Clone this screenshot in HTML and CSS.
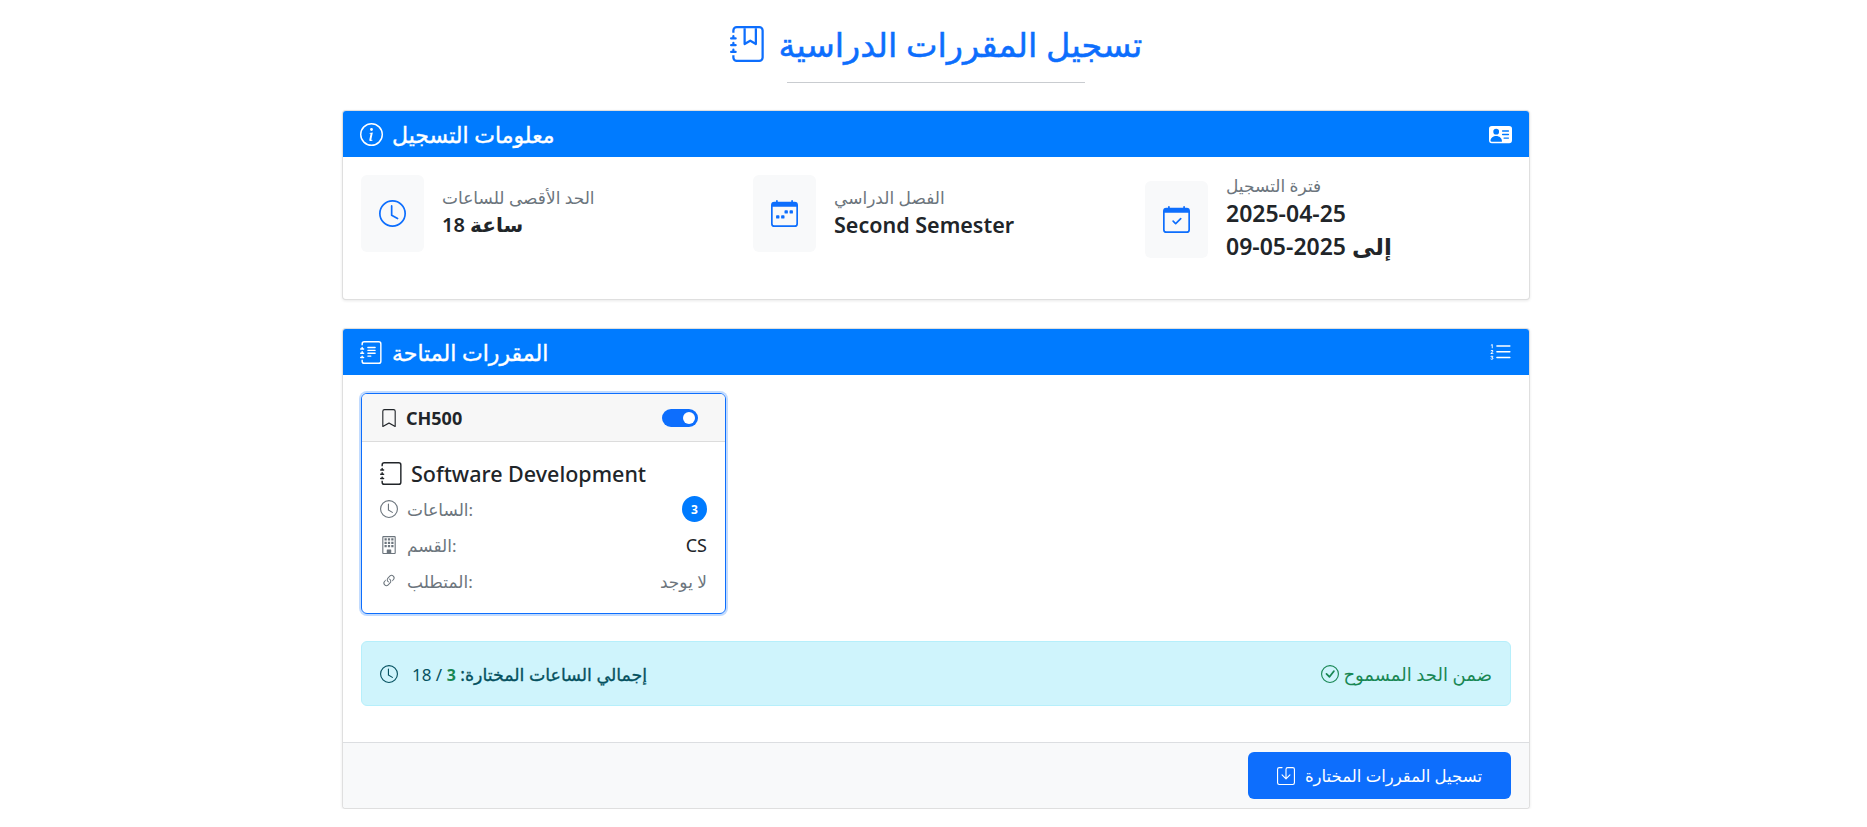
FILE: index.html
```html
<!DOCTYPE html>
<html lang="ar">
<head>
    <meta charset="UTF-8">
    <meta name="viewport" content="width=device-width, initial-scale=1.0">
    <title>تسجيل المقررات الدراسية</title>
    <link rel="stylesheet" href="styles.css">
</head>
<body>

<svg class="sprite" xmlns="http://www.w3.org/2000/svg">
    <symbol id="i-journal-bookmark" viewBox="0 0 16 16">
        <path fill-rule="evenodd" d="M6 8V1h1v6.117L8.743 6.07a.5.5 0 0 1 .514 0L11 7.117V1h1v7a.5.5 0 0 1-.757.429L9 7.083 6.757 8.43A.5.5 0 0 1 6 8z"/>
        <path d="M3 0h10a2 2 0 0 1 2 2v12a2 2 0 0 1-2 2H3a2 2 0 0 1-2-2v-1h1v1a1 1 0 0 0 1 1h10a1 1 0 0 0 1-1V2a1 1 0 0 0-1-1H3a1 1 0 0 0-1 1v1H1V2a2 2 0 0 1 2-2z"/>
        <path d="M1 5v-.5a.5.5 0 0 1 1 0V5h.5a.5.5 0 0 1 0 1h-2a.5.5 0 0 1 0-1H1zm0 3v-.5a.5.5 0 0 1 1 0V8h.5a.5.5 0 0 1 0 1h-2a.5.5 0 0 1 0-1H1zm0 3v-.5a.5.5 0 0 1 1 0v.5h.5a.5.5 0 0 1 0 1h-2a.5.5 0 0 1 0-1H1z"/>
    </symbol>
    <symbol id="i-journal" viewBox="0 0 16 16">
        <path d="M3 0h10a2 2 0 0 1 2 2v12a2 2 0 0 1-2 2H3a2 2 0 0 1-2-2v-1h1v1a1 1 0 0 0 1 1h10a1 1 0 0 0 1-1V2a1 1 0 0 0-1-1H3a1 1 0 0 0-1 1v1H1V2a2 2 0 0 1 2-2z"/>
        <path d="M1 5v-.5a.5.5 0 0 1 1 0V5h.5a.5.5 0 0 1 0 1h-2a.5.5 0 0 1 0-1H1zm0 3v-.5a.5.5 0 0 1 1 0V8h.5a.5.5 0 0 1 0 1h-2a.5.5 0 0 1 0-1H1zm0 3v-.5a.5.5 0 0 1 1 0v.5h.5a.5.5 0 0 1 0 1h-2a.5.5 0 0 1 0-1H1z"/>
    </symbol>
    <symbol id="i-journal-text" viewBox="0 0 16 16">
        <path d="M5 10.5a.5.5 0 0 1 .5-.5h2a.5.5 0 0 1 0 1h-2a.5.5 0 0 1-.5-.5zm0-2a.5.5 0 0 1 .5-.5h5a.5.5 0 0 1 0 1h-5a.5.5 0 0 1-.5-.5zm0-2a.5.5 0 0 1 .5-.5h5a.5.5 0 0 1 0 1h-5a.5.5 0 0 1-.5-.5zm0-2a.5.5 0 0 1 .5-.5h5a.5.5 0 0 1 0 1h-5a.5.5 0 0 1-.5-.5z"/>
        <path d="M3 0h10a2 2 0 0 1 2 2v12a2 2 0 0 1-2 2H3a2 2 0 0 1-2-2v-1h1v1a1 1 0 0 0 1 1h10a1 1 0 0 0 1-1V2a1 1 0 0 0-1-1H3a1 1 0 0 0-1 1v1H1V2a2 2 0 0 1 2-2z"/>
        <path d="M1 5v-.5a.5.5 0 0 1 1 0V5h.5a.5.5 0 0 1 0 1h-2a.5.5 0 0 1 0-1H1zm0 3v-.5a.5.5 0 0 1 1 0V8h.5a.5.5 0 0 1 0 1h-2a.5.5 0 0 1 0-1H1zm0 3v-.5a.5.5 0 0 1 1 0v.5h.5a.5.5 0 0 1 0 1h-2a.5.5 0 0 1 0-1H1z"/>
    </symbol>
    <symbol id="i-info" viewBox="0 0 16 16">
        <path d="M8 15A7 7 0 1 1 8 1a7 7 0 0 1 0 14zm0 1A8 8 0 1 0 8 0a8 8 0 0 0 0 16z"/>
        <path d="m8.93 6.588-2.29.287-.082.38.45.083c.294.07.352.176.288.469l-.738 3.468c-.194.897.105 1.319.808 1.319.545 0 1.178-.252 1.465-.598l.088-.416c-.2.176-.492.246-.686.246-.275 0-.375-.193-.304-.533L8.93 6.588zM9 4.5a1 1 0 1 1-2 0 1 1 0 0 1 2 0z"/>
    </symbol>
    <symbol id="i-vcard" viewBox="0 0 16 16">
        <path d="M0 4a2 2 0 0 1 2-2h12a2 2 0 0 1 2 2v8a2 2 0 0 1-2 2H2a2 2 0 0 1-2-2V4Zm9 1.5a.5.5 0 0 0 .5.5h4a.5.5 0 0 0 0-1h-4a.5.5 0 0 0-.5.5ZM9 8a.5.5 0 0 0 .5.5h4a.5.5 0 0 0 0-1h-4A.5.5 0 0 0 9 8Zm1 2.5a.5.5 0 0 0 .5.5h3a.5.5 0 0 0 0-1h-3a.5.5 0 0 0-.5.5Zm-1 2C9 10.567 7.21 9 5 9c-2.086 0-3.8 1.398-3.984 3.181A1 1 0 0 0 2 13h6.96c.026-.163.04-.33.04-.5ZM7 6a2 2 0 1 0-4 0 2 2 0 0 0 4 0Z"/>
    </symbol>
    <symbol id="i-list-ol" viewBox="0 0 16 16">
        <path fill-rule="evenodd" d="M5 11.5a.5.5 0 0 1 .5-.5h9a.5.5 0 0 1 0 1h-9a.5.5 0 0 1-.5-.5zm0-4a.5.5 0 0 1 .5-.5h9a.5.5 0 0 1 0 1h-9a.5.5 0 0 1-.5-.5zm0-4a.5.5 0 0 1 .5-.5h9a.5.5 0 0 1 0 1h-9a.5.5 0 0 1-.5-.5z"/>
        <path d="M1.713 11.865v-.474H2c.217 0 .363-.137.363-.317 0-.185-.158-.31-.361-.31-.223 0-.367.152-.373.31h-.59c.016-.467.373-.787.986-.787.588-.002.954.291.957.703a.595.595 0 0 1-.492.594v.033a.615.615 0 0 1 .569.631c.003.533-.502.8-1.051.8-.656 0-1-.37-1.008-.794h.582c.008.178.186.306.422.309.254 0 .424-.145.422-.35-.002-.195-.155-.348-.414-.348h-.3zm-.004-4.699h-.604v-.035c0-.408.295-.844.958-.844.583 0 .96.326.96.756 0 .389-.257.617-.476.848l-.537.572v.03h1.054V9H1.143v-.395l.957-.99c.138-.142.293-.304.293-.508 0-.18-.147-.32-.342-.32a.33.33 0 0 0-.342.338v.041zM2.564 5h-.635V2.924h-.031l-.598.42v-.567l.629-.443h.635V5z"/>
    </symbol>
    <symbol id="i-clock" viewBox="0 0 16 16">
        <path d="M8 3.5a.5.5 0 0 0-1 0V9a.5.5 0 0 0 .252.434l3.5 2a.5.5 0 0 0 .496-.868L8 8.71V3.5z"/>
        <path d="M8 16A8 8 0 1 0 8 0a8 8 0 0 0 0 16zm7-8A7 7 0 1 1 1 8a7 7 0 0 1 14 0z"/>
    </symbol>
    <symbol id="i-calendar-week" viewBox="0 0 16 16">
        <path d="M11 6.5a.5.5 0 0 1 .5-.5h1a.5.5 0 0 1 .5.5v1a.5.5 0 0 1-.5.5h-1a.5.5 0 0 1-.5-.5v-1zm-3 0a.5.5 0 0 1 .5-.5h1a.5.5 0 0 1 .5.5v1a.5.5 0 0 1-.5.5h-1a.5.5 0 0 1-.5-.5v-1zm-5 3a.5.5 0 0 1 .5-.5h1a.5.5 0 0 1 .5.5v1a.5.5 0 0 1-.5.5h-1a.5.5 0 0 1-.5-.5v-1zm3 0a.5.5 0 0 1 .5-.5h1a.5.5 0 0 1 .5.5v1a.5.5 0 0 1-.5.5h-1a.5.5 0 0 1-.5-.5v-1z"/>
        <path d="M3.5 0a.5.5 0 0 1 .5.5V1h8V.5a.5.5 0 0 1 1 0V1h1a2 2 0 0 1 2 2v11a2 2 0 0 1-2 2H2a2 2 0 0 1-2-2V3a2 2 0 0 1 2-2h1V.5a.5.5 0 0 1 .5-.5zM1 4v10a1 1 0 0 0 1 1h12a1 1 0 0 0 1-1V4H1z"/>
    </symbol>
    <symbol id="i-calendar-check" viewBox="0 0 16 16">
        <path d="M10.854 7.146a.5.5 0 0 1 0 .708l-3 3a.5.5 0 0 1-.708 0l-1.5-1.5a.5.5 0 1 1 .708-.708L7.5 9.793l2.646-2.647a.5.5 0 0 1 .708 0z"/>
        <path d="M3.5 0a.5.5 0 0 1 .5.5V1h8V.5a.5.5 0 0 1 1 0V1h1a2 2 0 0 1 2 2v11a2 2 0 0 1-2 2H2a2 2 0 0 1-2-2V3a2 2 0 0 1 2-2h1V.5a.5.5 0 0 1 .5-.5zM1 4v10a1 1 0 0 0 1 1h12a1 1 0 0 0 1-1V4H1z"/>
    </symbol>
    <symbol id="i-bookmark" viewBox="0 0 16 16">
        <path d="M2 2a2 2 0 0 1 2-2h8a2 2 0 0 1 2 2v13.5a.5.5 0 0 1-.777.416L8 13.101l-5.223 2.815A.5.5 0 0 1 2 15.5V2zm2-1a1 1 0 0 0-1 1v12.566l4.723-2.482a.5.5 0 0 1 .554 0L13 14.566V2a1 1 0 0 0-1-1H4z"/>
    </symbol>
    <symbol id="i-building" viewBox="0 0 16 16">
        <path d="M2 1a1 1 0 0 1 1-1h10a1 1 0 0 1 1 1v14a1 1 0 0 1-1 1H3a1 1 0 0 1-1-1V1Zm11 0H3v14h3v-2.5a.5.5 0 0 1 .5-.5h3a.5.5 0 0 1 .5.5V15h3V1Z"/>
        <path d="M4 2h2v2H4zM7 2h2v2H7zM10 2h2v2h-2zM4 5h2v2H4zM7 5h2v2H7zM10 5h2v2h-2zM4 8h2v2H4zM7 8h2v2H7zM10 8h2v2h-2z"/>
    </symbol>
    <symbol id="i-link" viewBox="0 0 16 16">
        <path d="M4.715 6.542 3.343 7.914a3 3 0 1 0 4.243 4.243l1.828-1.829A3 3 0 0 0 8.586 5.5L8 6.086a1.002 1.002 0 0 0-.154.199 2 2 0 0 1 .861 3.337L6.88 11.45a2 2 0 1 1-2.83-2.83l.793-.792a4.018 4.018 0 0 1-.128-1.287z"/>
        <path d="M6.586 4.672A3 3 0 0 0 7.414 9.5l.775-.776a2 2 0 0 1-.896-3.346L9.12 3.55a2 2 0 1 1 2.83 2.83l-.793.792c.112.42.155.855.128 1.287l1.372-1.372a3 3 0 1 0-4.243-4.243L6.586 4.672z"/>
    </symbol>
    <symbol id="i-check-circle" viewBox="0 0 16 16">
        <path d="M8 15A7 7 0 1 1 8 1a7 7 0 0 1 0 14zm0 1A8 8 0 1 0 8 0a8 8 0 0 0 0 16z"/>
        <path d="M10.97 4.97a.235.235 0 0 0-.02.022L7.477 9.417 5.384 7.323a.75.75 0 0 0-1.06 1.06L6.97 11.03a.75.75 0 0 0 1.079-.02l3.992-4.99a.75.75 0 0 0-1.071-1.05z"/>
    </symbol>
    <symbol id="i-save" viewBox="0 0 16 16">
        <path d="M2 1a1 1 0 0 0-1 1v12a1 1 0 0 0 1 1h12a1 1 0 0 0 1-1V2a1 1 0 0 0-1-1H9.5a1 1 0 0 0-1 1v7.293l2.646-2.647a.5.5 0 0 1 .708.708l-3.5 3.5a.5.5 0 0 1-.708 0l-3.5-3.5a.5.5 0 1 1 .708-.708L7.5 9.293V2a2 2 0 0 1 2-2H14a2 2 0 0 1 2 2v12a2 2 0 0 1-2 2H2a2 2 0 0 1-2-2V2a2 2 0 0 1 2-2h2.5a.5.5 0 0 1 0 1H2z"/>
    </symbol>
</svg>

<div class="container">
    <div class="page-head">
        <h1 class="page-title">
            <svg class="icon title-icon"><use href="#i-journal-bookmark"/></svg>
            <span>تسجيل المقررات الدراسية</span>
        </h1>
        <div class="title-line"></div>
    </div>

    <!-- معلومات التسجيل -->
    <section class="panel info-panel">
        <div class="panel-header">
            <h2 class="panel-title">
                <svg class="icon"><use href="#i-info"/></svg>
                <span>معلومات التسجيل</span>
            </h2>
            <svg class="icon header-icon"><use href="#i-vcard"/></svg>
        </div>
        <div class="panel-body info-grid">
            <div class="info-item">
                <div class="info-icon"><svg class="icon"><use href="#i-clock"/></svg></div>
                <div>
                    <div class="info-label">الحد الأقصى للساعات</div>
                    <div class="info-value">ساعة 18</div>
                </div>
            </div>
            <div class="info-item">
                <div class="info-icon"><svg class="icon"><use href="#i-calendar-week"/></svg></div>
                <div>
                    <div class="info-label">الفصل الدراسي</div>
                    <div class="info-value info-latin">Second Semester</div>
                </div>
            </div>
            <div class="info-item">
                <div class="info-icon"><svg class="icon"><use href="#i-calendar-check"/></svg></div>
                <div>
                    <div class="info-label">فترة التسجيل</div>
                    <div class="info-value info-date">2025-04-25</div>
                    <div class="info-value info-date">إلى 2025-05-09</div>
                </div>
            </div>
        </div>
    </section>

    <!-- المقررات المتاحة -->
    <section class="panel courses-panel">
        <div class="panel-header">
            <h2 class="panel-title">
                <svg class="icon"><use href="#i-journal-text"/></svg>
                <span>المقررات المتاحة</span>
            </h2>
            <svg class="icon header-icon"><use href="#i-list-ol"/></svg>
        </div>
        <div class="panel-body">
            <div class="course-card">
                <div class="course-head">
                    <div class="course-code">
                        <svg class="icon"><use href="#i-bookmark"/></svg>
                        <span>CH500</span>
                    </div>
                    <span class="switch"></span>
                </div>
                <div class="course-body">
                    <div class="course-name">
                        <svg class="icon"><use href="#i-journal"/></svg>
                        <span>Software Development</span>
                    </div>
                    <div class="course-row">
                        <div class="row-label"><svg class="icon"><use href="#i-clock"/></svg><span>الساعات:</span></div>
                        <span class="badge">3</span>
                    </div>
                    <div class="course-row">
                        <div class="row-label"><svg class="icon"><use href="#i-building"/></svg><span>القسم:</span></div>
                        <span class="row-value">CS</span>
                    </div>
                    <div class="course-row">
                        <div class="row-label"><svg class="icon link-icon"><use href="#i-link"/></svg><span>المتطلب:</span></div>
                        <span class="row-muted">لا يوجد</span>
                    </div>
                </div>
            </div>

            <div class="total-alert">
                <div class="total-text">
                    <svg class="icon"><use href="#i-clock"/></svg>
                    <span><strong>إجمالي الساعات المختارة: <b class="total-num">3</b></strong> / 18</span>
                </div>
                <div class="total-status">
                    <svg class="icon"><use href="#i-check-circle"/></svg>
                    <span>ضمن الحد المسموح</span>
                </div>
            </div>
        </div>
        <div class="panel-footer">
            <button class="btn-submit">
                <svg class="icon"><use href="#i-save"/></svg>
                <span>تسجيل المقررات المختارة</span>
            </button>
        </div>
    </section>
</div>

</body>
</html>
```

FILE: styles.css
```css
* {
    box-sizing: border-box;
}

body {
    margin: 0;
    font-family: "Noto Sans", "DejaVu Sans", sans-serif;
    font-size: 16px;
    color: #212529;
    background-color: #fff;
}

.sprite {
    display: none;
}

.icon {
    width: 1em;
    height: 1em;
    fill: currentColor;
    flex-shrink: 0;
}

.container {
    width: 1188px;
    margin-left: 342px;
    padding-top: 20px;
}

.page-head {
    display: flex;
    flex-direction: column;
    align-items: center;
    margin-bottom: 27px;
}

.page-title {
    display: flex;
    align-items: center;
    gap: 13px;
    margin: 0;
    height: 48px;
    font-size: 33.5px;
    font-weight: 400;
    -webkit-text-stroke: .5px #0d6efd;
    color: #0d6efd;
}

.title-icon {
    font-size: 36px;
}

.title-line {
    width: 298px;
    height: 1px;
    margin-top: 14px;
    background-color: #c9ccd0;
}

.panel {
    border: 1px solid rgba(0, 0, 0, .125);
    border-radius: 4px;
    overflow: hidden;
    background-color: #fff;
    box-shadow: 0 1px 3px rgba(0, 0, 0, .09);
}

.info-panel {
    height: 190px;
    margin-bottom: 28px;
}

.panel-header {
    display: flex;
    justify-content: space-between;
    align-items: center;
    height: 46px;
    padding: 0 17px;
    color: #fff;
    background-color: #007bff;
}

.panel-title {
    display: flex;
    align-items: center;
    gap: 9px;
    margin: 0;
    font-size: 22px;
    font-weight: 400;
    -webkit-text-stroke: .4px #fff;
}

.panel-title .icon {
    font-size: 23px;
}

.header-icon {
    font-size: 23px;
}

.panel-body {
    padding: 18px;
}

.info-grid {
    display: grid;
    grid-template-columns: repeat(3, 392px);
    align-items: start;
}

.info-item {
    display: flex;
    align-items: center;
    gap: 18px;
}

.info-icon {
    display: flex;
    justify-content: center;
    align-items: center;
    width: 63px;
    height: 77px;
    border-radius: 6px;
    color: #0d6efd;
    background-color: #f8f9fa;
    font-size: 27px;
}

.info-label {
    font-size: 17px;
    line-height: 22px;
    color: #6c757d;
}

.info-value {
    font-size: 20px;
    font-weight: 600;
    line-height: 31px;
}

.info-latin {
    font-size: 21.5px;
}

.info-date {
    font-size: 23px;
    line-height: 33px;
}

.course-card {
    width: 365px;
    border: 1px solid #0d6efd;
    border-radius: 6px;
    overflow: hidden;
    box-shadow: 0 0 0 2px rgba(13, 110, 253, .25);
}

.course-head {
    display: flex;
    justify-content: space-between;
    align-items: center;
    height: 48px;
    padding: 0 27px 0 18px;
    background-color: #f7f7f7;
    border-bottom: 1px solid #dcdcdc;
}

.course-code {
    display: flex;
    align-items: center;
    gap: 8px;
    font-weight: 700;
    font-size: 18px;
}

.course-code .icon {
    font-size: 18px;
}

.switch {
    position: relative;
    display: block;
    width: 36px;
    height: 18px;
    border-radius: 9px;
    background-color: #0d6efd;
}

.switch::after {
    content: "";
    position: absolute;
    top: 3px;
    right: 3px;
    width: 12px;
    height: 12px;
    border-radius: 50%;
    background-color: #fff;
}

.course-body {
    padding: 16px 18px 14px;
}

.course-name {
    display: flex;
    align-items: center;
    gap: 8px;
    height: 30px;
    margin-bottom: 3px;
    font-size: 21.5px;
    font-weight: 500;
}

.course-name .icon {
    font-size: 23px;
}

.course-row {
    display: flex;
    justify-content: space-between;
    align-items: center;
    height: 36px;
    font-size: 17px;
}

.row-label {
    display: flex;
    align-items: center;
    gap: 9px;
    color: #6c757d;
}

.row-label .icon {
    font-size: 18px;
}

.row-label .link-icon {
    font-size: 16px;
    margin: 0 1px;
}

.row-value {
    font-size: 18px;
}

.row-muted {
    color: #6c757d;
}

.badge {
    display: flex;
    justify-content: center;
    align-items: center;
    width: 25px;
    height: 26px;
    border-radius: 50%;
    font-size: 12px;
    font-weight: 700;
    color: #fff;
    background-color: #007bff;
}

.total-alert {
    display: flex;
    justify-content: space-between;
    align-items: center;
    height: 65px;
    margin-top: 27px;
    margin-bottom: 18px;
    padding: 0 18px;
    border: 1px solid #b6effb;
    border-radius: 6px;
    color: #055160;
    background-color: #cff4fc;
}

.total-text,
.total-status {
    display: flex;
    align-items: center;
}

.total-text {
    gap: 14px;
    font-size: 17px;
}

.total-text .icon {
    font-size: 18px;
}

.total-text strong {
    font-size: 17.4px;
    font-weight: 400;
    -webkit-text-stroke: .3px #055160;
}

.total-num {
    font-size: 16px;
    font-weight: 700;
    -webkit-text-stroke: 0;
    color: #198754;
}

.total-status {
    gap: 4px;
    font-size: 18px;
    color: #198754;
}

.total-status .icon {
    font-size: 18px;
}

.panel-footer {
    display: flex;
    justify-content: flex-end;
    height: 66px;
    padding: 9px 18px;
    border-top: 1px solid #dcdee1;
    background-color: #f8f9fa;
}

.btn-submit {
    display: flex;
    justify-content: center;
    align-items: center;
    gap: 10px;
    width: 263px;
    height: 47px;
    border: 0;
    border-radius: 6px;
    font-family: inherit;
    font-size: 16.5px;
    color: #fff;
    background-color: #0d6efd;
}

.btn-submit .icon {
    font-size: 18px;
}
```
